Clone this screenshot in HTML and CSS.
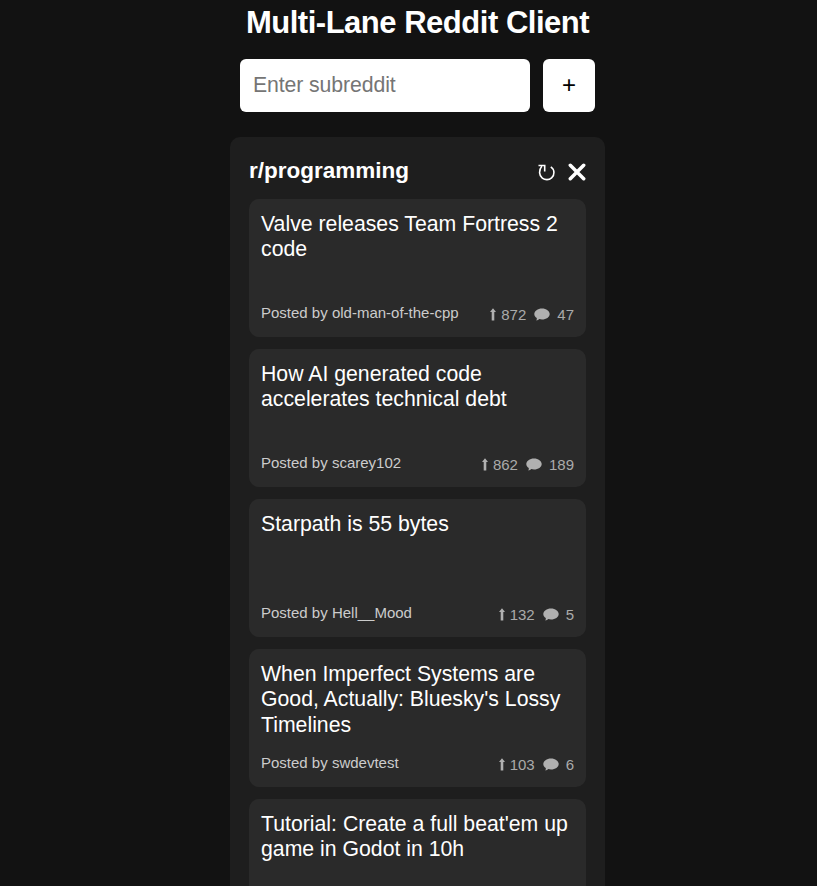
FILE: index.html
```html
<!DOCTYPE html>
<html lang="en">
<head>
<meta charset="utf-8">
<title>Multi-Lane Reddit Client</title>
<link rel="stylesheet" href="styles.css">
</head>
<body>
<svg class="sprite" aria-hidden="true">
  <symbol id="up" viewBox="0 0 6 13"><path d="M3 .3 6 4H4.300v8.400H1.700V4H0z"/></symbol>
  <symbol id="chat" viewBox="0 0 16 13"><path d="M8 .5c4.300 0 7.700 2.500 7.700 5.500S12.300 11.500 8 11.500c-1 0-1.900-.1-2.700-.4-.7.8-1.800 1.300-3 1.400.4-.7.6-1.500.5-2.500C1.200 9 .3 7.600.3 6 .3 3 3.700.5 8 .5z"/></symbol>
</svg>
<h1 class="title">Multi-Lane Reddit Client</h1>
<form class="add">
  <input class="add-input" type="text" placeholder="Enter subreddit">
  <button class="add-button" type="button">+</button>
</form>
<main class="lane">
  <header class="lane-head">
    <h2 class="lane-name">r/programming</h2>
    <div class="actions">
      <button class="action" type="button" aria-label="Refresh"><svg width="18" height="18" viewBox="0 0 18 18"><path d="M1.500 2.500H7.700V8.500M4.800 3.200C1.500 7 2 12.500 5.300 15.100c2.700 2.100 6.700 2.100 9.300-.2 3.300-3 3.200-8.400-.8-11.100" fill="none" stroke="#fff" stroke-width="1.600"/></svg></button>
      <button class="action" type="button" aria-label="Remove"><svg width="18" height="18" viewBox="0 0 18 18"><path d="M2.300 2.300 15.700 15.700M15.700 2.300 2.300 15.700" fill="none" stroke="#fff" stroke-width="3.500" stroke-linecap="round"/></svg></button>
    </div>
  </header>
  <article class="post">
    <h3 class="post-title">Valve releases Team Fortress 2 code</h3>
    <div class="meta"><span class="author">Posted by old-man-of-the-cpp</span><span class="stats"><svg class="up"><use href="#up"/></svg><span>872</span><svg class="chat"><use href="#chat"/></svg><span>47</span></span></div>
  </article>
  <article class="post">
    <h3 class="post-title">How AI generated code accelerates technical debt</h3>
    <div class="meta"><span class="author">Posted by scarey102</span><span class="stats"><svg class="up"><use href="#up"/></svg><span>862</span><svg class="chat"><use href="#chat"/></svg><span>189</span></span></div>
  </article>
  <article class="post">
    <h3 class="post-title">Starpath is 55 bytes</h3>
    <div class="meta"><span class="author">Posted by Hell__Mood</span><span class="stats"><svg class="up"><use href="#up"/></svg><span>132</span><svg class="chat"><use href="#chat"/></svg><span>5</span></span></div>
  </article>
  <article class="post">
    <h3 class="post-title">When Imperfect Systems are Good, Actually: Bluesky's Lossy Timelines</h3>
    <div class="meta"><span class="author">Posted by swdevtest</span><span class="stats"><svg class="up"><use href="#up"/></svg><span>103</span><svg class="chat"><use href="#chat"/></svg><span>6</span></span></div>
  </article>
  <article class="post">
    <h3 class="post-title">Tutorial: Create a full beat'em up game in Godot in 10h</h3>
  </article>
</main>
</body>
</html>
```

FILE: styles.css
```css
* { box-sizing: border-box; }
body {
  display: flex;
  flex-direction: column;
  height: 100vh;
  margin: 0;
  overflow: hidden;
  background: #121212;
  color: #fff;
  font-family: "Liberation Sans", Arial, sans-serif;
}
.sprite { display: none; }
.title {
  flex: none;
  width: 375px;
  height: 59px;
  margin: 0 0 0 230px;
  padding-top: 5px;
  font-size: 31px;
  letter-spacing: -0.48px;
  line-height: 36px;
  text-align: center;
  white-space: nowrap;
}
.add {
  display: flex;
  flex: none;
  gap: 13px;
  width: 355px;
  margin: 0 0 25px 240px;
}
.add-input {
  width: 290px;
  height: 53px;
  padding: 0 13px 1px;
  border: 0;
  border-radius: 6px;
  background: #fff;
  font: 21.25px "Liberation Sans", Arial, sans-serif;
  letter-spacing: -0.1px;
}
.add-input::placeholder { color: #757575; }
.add-button {
  width: 52px;
  height: 53px;
  padding: 0 0 2px;
  border: 0;
  border-radius: 6px;
  background: #fff;
  color: #000;
  font: 24px "Liberation Sans", Arial, sans-serif;
}
.lane {
  flex: 1;
  min-height: 0;
  overflow: hidden;
  width: 375px;
  margin-left: 230px;
  padding: 19px 19px 0;
  border-radius: 10px 10px 0 0;
  background: #1e1e1e;
}
.lane-head {
  display: flex;
  justify-content: space-between;
  height: 43px;
}
.lane-name { margin: 0; font-size: 22.5px; line-height: 29px; }
.actions { display: flex; gap: 13px; padding-top: 7px; }
.action { width: 18px; height: 18px; padding: 0; border: 0; background: none; }
.action svg { display: block; }
.post {
  display: flex;
  flex-direction: column;
  justify-content: space-between;
  height: 138px;
  margin-bottom: 12px;
  padding: 13px 12px;
  border-radius: 10px;
  background: #2a2a2a;
}
.post-title { margin: 0; font-size: 21.25px; font-weight: 400; line-height: 25.400px; }
.meta {
  display: flex;
  justify-content: space-between;
  height: 19px;
  font-size: 15px;
  line-height: 17px;
}
.author { color: #ccc; margin-top: -1px; }
.stats { display: flex; color: #aaa; margin-top: 1px; }
.stats svg { fill: #b0b0b0; flex: none; }
.up { width: 6px; height: 13px; margin: 2px 5px 0 0; }
.chat { width: 16px; height: 13px; margin: 2px 7px 0 8px; }
```
